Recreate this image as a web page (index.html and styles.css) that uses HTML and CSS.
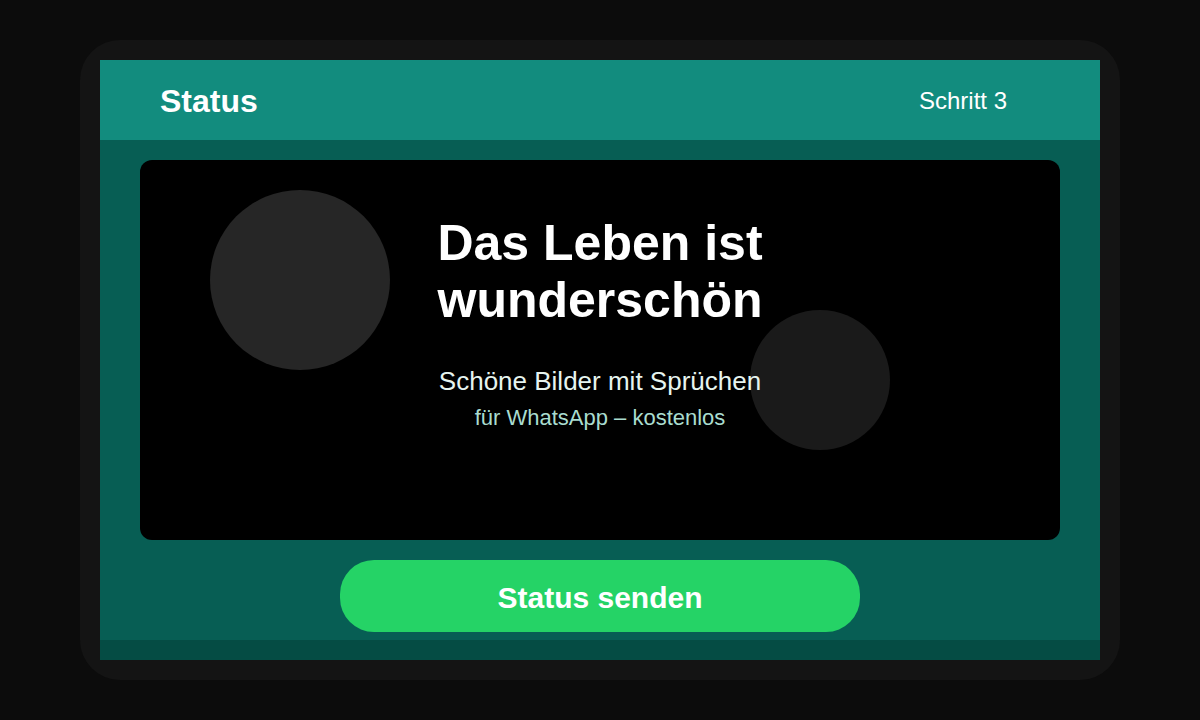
FILE: index.html
```html
<!DOCTYPE html>
<html lang="de">
<head>
<meta charset="utf-8">
<title>Status</title>
<link rel="stylesheet" href="styles.css">
</head>
<body>
<div class="device">
  <div class="screen">
    <header class="topbar">
      <h1 class="topbar-title">Status</h1>
      <span class="topbar-step">Schritt 3</span>
    </header>
    <main class="content">
      <section class="card">
        <span class="blob blob-a"></span>
        <span class="blob blob-b"></span>
        <div class="card-text">
          <h2 class="headline">Das Leben ist wunderschön</h2>
          <p class="subline">Schöne Bilder mit Sprüchen</p>
          <p class="tagline">für WhatsApp – kostenlos</p>
        </div>
      </section>
      <button class="send-btn" type="button">Status senden</button>
    </main>
    <footer class="bottombar"></footer>
  </div>
</div>
</body>
</html>
```
FILE: styles.css
```css
* { box-sizing: border-box; }
html, body {
  margin: 0;
  padding: 0;
  background: #0c0c0c;
  font-family: "Liberation Sans", Arial, sans-serif;
}
body {
  width: 1200px;
  height: 720px;
  padding: 40px 80px;
}
.device {
  width: 1040px;
  height: 640px;
  background: #141414;
  border-radius: 40px;
  padding: 20px;
}
.screen {
  width: 1000px;
  height: 600px;
  display: flex;
  flex-direction: column;
}
.topbar {
  height: 80px;
  background: #128c7e;
  display: flex;
  align-items: center;
  justify-content: space-between;
  padding: 2px 93px 0 60px;
  color: #ffffff;
}
.topbar-title {
  margin: 0;
  font-size: 32px;
  font-weight: 700;
}
.topbar-step {
  font-size: 24px;
}
.content {
  flex: 1;
  background: #075e54;
  display: flex;
  flex-direction: column;
  align-items: center;
  padding: 20px 40px 0;
}
.card {
  position: relative;
  width: 920px;
  height: 380px;
  background: #000000;
  border-radius: 12px;
  overflow: hidden;
}
.blob {
  position: absolute;
  border-radius: 50%;
}
.blob-a {
  left: 70px;
  top: 30px;
  width: 180px;
  height: 180px;
  background: #262626;
}
.blob-b {
  left: 610px;
  top: 150px;
  width: 140px;
  height: 140px;
  background: #1a1a1a;
}
.card-text {
  position: relative;
  display: flex;
  flex-direction: column;
  align-items: center;
  text-align: center;
  padding-top: 55px;
}
.headline {
  margin: 0;
  max-width: 400px;
  font-size: 50px;
  line-height: 57px;
  font-weight: 700;
  color: #ffffff;
}
.subline {
  margin: 37px 0 0;
  font-size: 26px;
  line-height: 30px;
  color: #e6f4ef;
}
.tagline {
  margin: 9px 0 0;
  font-size: 22px;
  line-height: 26px;
  color: #a9dccf;
}
.send-btn {
  margin-top: 20px;
  width: 520px;
  height: 72px;
  padding: 4px 0 0;
  border: 0;
  border-radius: 34px;
  background: #25d366;
  color: #ffffff;
  font-family: "Liberation Sans", Arial, sans-serif;
  font-size: 30px;
  font-weight: 700;
}
.bottombar {
  height: 20px;
  background: #054c44;
}
```
